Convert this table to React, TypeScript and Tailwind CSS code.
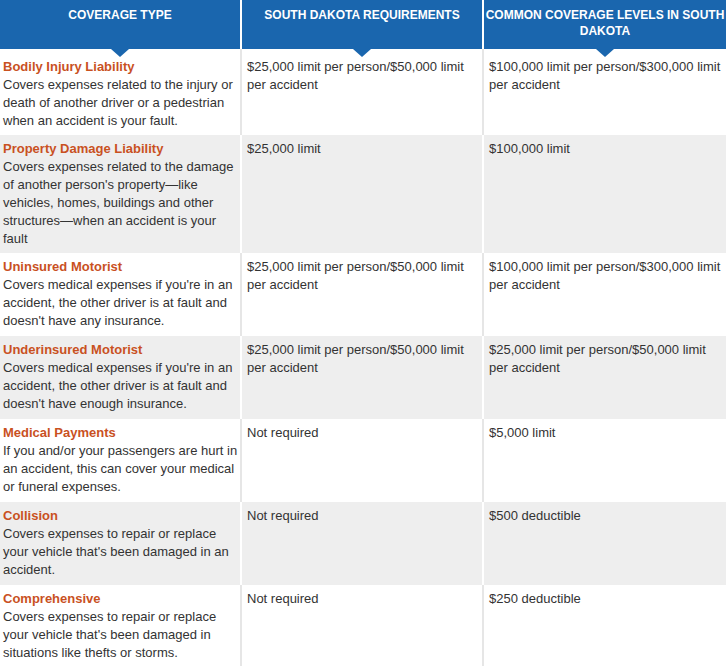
import React from "react";

type Row = {
  title: string;
  desc: string;
  required: string;
  common: string;
};

const rows: Row[] = [
  {
    title: "Bodily Injury Liability",
    desc: "Covers expenses related to the injury or death of another driver or a pedestrian when an accident is your fault.",
    required: "$25,000 limit per person/$50,000 limit per accident",
    common: "$100,000 limit per person/$300,000 limit per accident",
  },
  {
    title: "Property Damage Liability",
    desc: "Covers expenses related to the damage of another person's property\u2014like vehicles, homes, buildings and other structures\u2014when an accident is your fault",
    required: "$25,000 limit",
    common: "$100,000 limit",
  },
  {
    title: "Uninsured Motorist",
    desc: "Covers medical expenses if you're in an accident, the other driver is at fault and doesn't have any insurance.",
    required: "$25,000 limit per person/$50,000 limit per accident",
    common: "$100,000 limit per person/$300,000 limit per accident",
  },
  {
    title: "Underinsured Motorist",
    desc: "Covers medical expenses if you're in an accident, the other driver is at fault and doesn't have enough insurance.",
    required: "$25,000 limit per person/$50,000 limit per accident",
    common: "$25,000 limit per person/$50,000 limit per accident",
  },
  {
    title: "Medical Payments",
    desc: "If you and/or your passengers are hurt in an accident, this can cover your medical or funeral expenses.",
    required: "Not required",
    common: "$5,000 limit",
  },
  {
    title: "Collision",
    desc: "Covers expenses to repair or replace your vehicle that's been damaged in an accident.",
    required: "Not required",
    common: "$500 deductible",
  },
  {
    title: "Comprehensive",
    desc: "Covers expenses to repair or replace your vehicle that's been damaged in situations like thefts or storms.",
    required: "Not required",
    common: "$250 deductible",
  },
];

const HeaderCell = ({ label, last }: { label: string; last?: boolean }) => (
  <div
    className={`relative px-0 pt-[7px] text-center text-[12px] font-bold uppercase leading-[16px] text-white ${
      last ? "" : "border-r-2 border-white"
    }`}
  >
    {label}
    <span className="absolute bottom-[-8px] left-1/2 z-10 -ml-[9px] h-0 w-0 border-x-[9px] border-t-[8px] border-x-transparent border-t-[#1a66ae]" />
  </div>
);

export default function App() {
  return (
    <div
      className="w-[726px] h-[666px] overflow-hidden bg-white text-[13px] leading-[18px] text-[#333333]"
      style={{ fontFamily: '"Liberation Sans", Arial, sans-serif' }}
    >
      <div className="grid h-[49px] grid-cols-[242px_242px_242px] bg-[#1a66ae]">
        <HeaderCell label="Coverage Type" />
        <HeaderCell label="South Dakota Requirements" />
        <HeaderCell label="Common Coverage Levels in South Dakota" last />
      </div>
      {rows.map((row, i) => {
        const gray = i % 2 === 1;
        const sep = gray ? "border-white" : "border-[#e6e6e6]";
        const pad =
          i === 0 ? "pt-[9px] pb-[5px]" : i === 1 ? "pt-[5px] pb-[5px]" : "pt-[5px] pb-[6px]";
        return (
          <div
            key={row.title}
            className={`grid grid-cols-[242px_242px_242px] ${gray ? "bg-[#eeeeee]" : "bg-white"}`}
          >
            <div className={`border-r-2 ${sep} ${pad} pl-[3px] pr-[2px]`}>
              <div className="font-bold text-[#c9511f]">{row.title}</div>
              <div>{row.desc}</div>
            </div>
            <div className={`border-r-2 ${sep} ${pad} pl-[5px] pr-[4px]`}>
              {row.required}
            </div>
            <div className={`${pad} pl-[5px] pr-[1px]`}>{row.common}</div>
          </div>
        );
      })}
    </div>
  );
}
